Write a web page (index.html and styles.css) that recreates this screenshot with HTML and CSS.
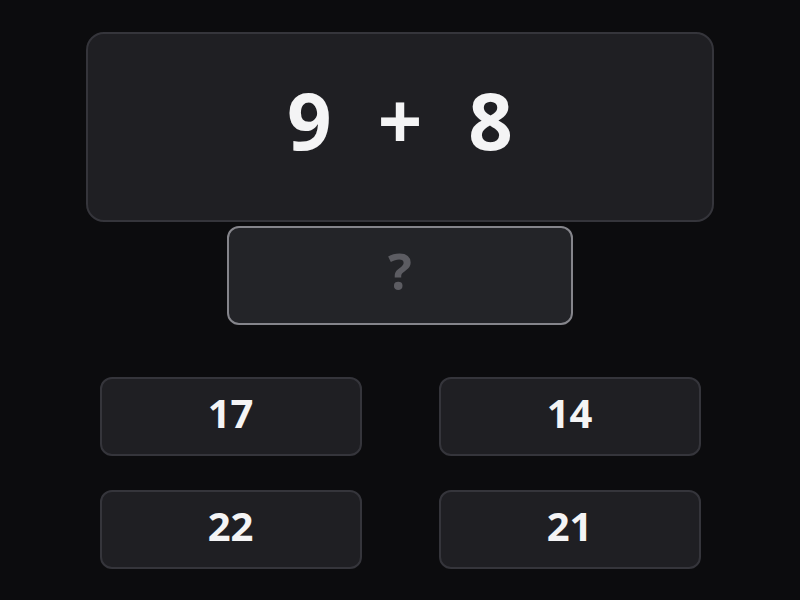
FILE: index.html
```html
<!DOCTYPE html>
<html lang="en">
<head>
<meta charset="utf-8">
<title>Quick Add</title>
<link rel="stylesheet" href="styles.css">
</head>
<body>
<main class="game">
  <section class="problem">
    <span class="term">9</span>
    <span class="op">+</span>
    <span class="term">8</span>
  </section>
  <div class="answer">?</div>
  <div class="choices">
    <button class="choice">17</button>
    <button class="choice">14</button>
    <button class="choice">22</button>
    <button class="choice">21</button>
  </div>
</main>
</body>
</html>
```
FILE: styles.css
```css
html, body {
  margin: 0;
  height: 100%;
  background: #0c0c0e;
}

body {
  font-family: "Open Sans", "Noto Sans", sans-serif;
  color: #f4f4f5;
}

.game {
  display: flex;
  flex-direction: column;
  align-items: center;
  padding-top: 32px;
}

.problem {
  box-sizing: border-box;
  width: 628px;
  height: 190px;
  padding-bottom: 14px;
  background: #1f1f23;
  border: 2px solid #35353b;
  border-radius: 18px;
  display: flex;
  justify-content: center;
  align-items: center;
  gap: 46px;
  font-weight: bold;
  font-size: 78px;
  line-height: 1;
}

.answer {
  box-sizing: border-box;
  width: 346px;
  height: 99px;
  margin-top: 4px;
  padding-bottom: 10px;
  background: #232428;
  border: 2px solid #85858b;
  border-radius: 12px;
  display: flex;
  justify-content: center;
  align-items: center;
  font-weight: bold;
  font-size: 50px;
  line-height: 1;
  color: #5c5c62;
}

.choices {
  margin-top: 52px;
  display: grid;
  grid-template-columns: 262px 262px;
  column-gap: 77px;
  row-gap: 34px;
}

.choice {
  box-sizing: border-box;
  height: 79px;
  padding: 0 0 7px;
  background: #1f1f23;
  border: 2px solid #35353b;
  border-radius: 12px;
  color: #f4f4f5;
  font-family: inherit;
  font-weight: bold;
  font-size: 40px;
  line-height: 1;
}
```
